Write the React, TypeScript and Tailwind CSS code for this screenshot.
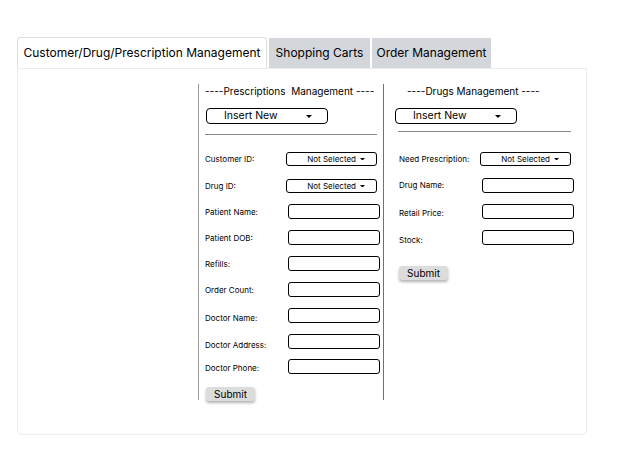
import React from "react";

// ─── Small form parts ─────────────────────────────────────────────────────────

function Caret({ className = "" }: { className?: string }) {
  return (
    <svg viewBox="0 0 6 3" className={className} fill="currentColor">
      <path d="M0 0 L6 0 L3 3 Z" />
    </svg>
  );
}

function BigSelect() {
  return (
    <div className="w-[122px] h-[16px] border border-black rounded-[4px] flex items-center text-[10.5px] leading-none text-black">
      <span className="ml-[17px]">Insert New</span>
      <Caret className="w-[6px] h-[3px] ml-[28px]" />
    </div>
  );
}

function SmallSelect() {
  return (
    <div className="w-[91px] h-[14px] border border-black rounded-[3px] flex items-center justify-end pr-[11px] text-[8px] leading-none text-black">
      <span>Not Selected</span>
      <Caret className="w-[5px] h-[2.5px] ml-[4px]" />
    </div>
  );
}

function TextBox() {
  return <div className="ml-[2px] w-[92px] h-[15px] border border-black rounded-[3px] bg-white" />;
}

function SubmitButton() {
  return (
    <button className="w-[49px] h-[14px] rounded-[3px] bg-[#dcdcdc] text-[10px] leading-none text-black shadow-[0_2px_3px_rgba(0,0,0,0.3)] flex items-center justify-center">
      Submit
    </button>
  );
}

type Row = { label: string; kind: "select" | "input"; mt: string; shift?: string };

const rxRows: Row[] = [
  { label: "Customer ID:",    kind: "select", mt: "mt-[17px]" },
  { label: "Drug ID:",        kind: "select", mt: "mt-[13px]" },
  { label: "Patient Name:",   kind: "input",  mt: "mt-[11px]" },
  { label: "Patient DOB:",    kind: "input",  mt: "mt-[11px]" },
  { label: "Refills:",        kind: "input",  mt: "mt-[11px]" },
  { label: "Order Count:",    kind: "input",  mt: "mt-[11px]" },
  { label: "Doctor Name:",    kind: "input",  mt: "mt-[11px]", shift: "translate-y-[2px]" },
  { label: "Doctor Address:", kind: "input",  mt: "mt-[11px]", shift: "translate-y-[3px]" },
  { label: "Doctor Phone:",   kind: "input",  mt: "mt-[10px]", shift: "translate-y-[1px]" },
];

const drugRows: Row[] = [
  { label: "Need Prescription:", kind: "select", mt: "mt-[20px]" },
  { label: "Drug Name:",         kind: "input",  mt: "mt-[12px]", shift: "-translate-y-[1px]" },
  { label: "Retail Price:",      kind: "input",  mt: "mt-[11px]", shift: "translate-y-[1px]" },
  { label: "Stock:",             kind: "input",  mt: "mt-[11px]", shift: "translate-y-[2px]" },
];

function FormRow({ row }: { row: Row }) {
  return (
    <div className={`flex items-center ${row.mt}`}>
      <span className={`w-[81px] shrink-0 text-[8px] leading-none text-black ${row.shift ?? ""}`}>
        {row.label}
      </span>
      {row.kind === "select" ? <SmallSelect /> : <TextBox />}
    </div>
  );
}

// ─── Page ─────────────────────────────────────────────────────────────────────

export default function App() {
  return (
    <div
      className="w-[637px] h-[455px] bg-white pt-[38px] pl-[17px]"
      style={{ fontFamily: "Inter, 'Liberation Sans', sans-serif" }}
    >
      {/* Tabs */}
      <div className="flex items-end gap-[2px] h-[30px] whitespace-nowrap">
        <div className="w-[250px] h-[31px] border border-b-0 border-[#dedede] rounded-t-[4px] bg-white flex items-center justify-center text-[12px] text-black relative z-10">
          Customer/Drug/Prescription Management
        </div>
        <div className="w-[101px] h-[30px] bg-[#d3d6db] flex items-center justify-center text-[12px] text-black">
          Shopping Carts
        </div>
        <div className="w-[119px] h-[30px] bg-[#d3d6db] flex items-center justify-center text-[12px] text-black">
          Order Management
        </div>
      </div>

      {/* Panel */}
      <div className="w-[570px] h-[367px] border border-[#ececec] rounded-b-[4px] pt-[15px] flex">
        <div className="w-[180px] shrink-0" />

        {/* Prescriptions */}
        <div className="w-[186px] h-[316px] border-l border-r border-l-[#9a9a9a] border-r-[#7d6b73] pl-[6px] flex flex-col">
          <div className="text-[10px] leading-[14px] text-black whitespace-pre">
            {"----Prescriptions  Management ----"}
          </div>
          <div className="mt-[10px] ml-[1px]">
            <BigSelect />
          </div>
          <div className="mt-[10px] w-[172px] border-t border-[#8a8a8a]" />
          {rxRows.map((r) => (
            <FormRow key={r.label} row={r} />
          ))}
          <div className="mt-[13px] ml-[1px]">
            <SubmitButton />
          </div>
        </div>

        {/* Drugs */}
        <div className="w-[190px] h-[316px] pl-[11px] flex flex-col">
          <div className="text-[10px] leading-[14px] text-black whitespace-pre ml-[12px]">
            {"----Drugs Management ----"}
          </div>
          <div className="mt-[10px]">
            <BigSelect />
          </div>
          <div className="mt-[7px] ml-[3px] w-[173px] border-t border-[#8a8a8a]" />
          <div className="ml-[4px] flex flex-col">
            {drugRows.map((r) => (
              <FormRow key={r.label} row={r} />
            ))}
            <div className="mt-[21px]">
              <SubmitButton />
            </div>
          </div>
        </div>
      </div>
    </div>
  );
}
